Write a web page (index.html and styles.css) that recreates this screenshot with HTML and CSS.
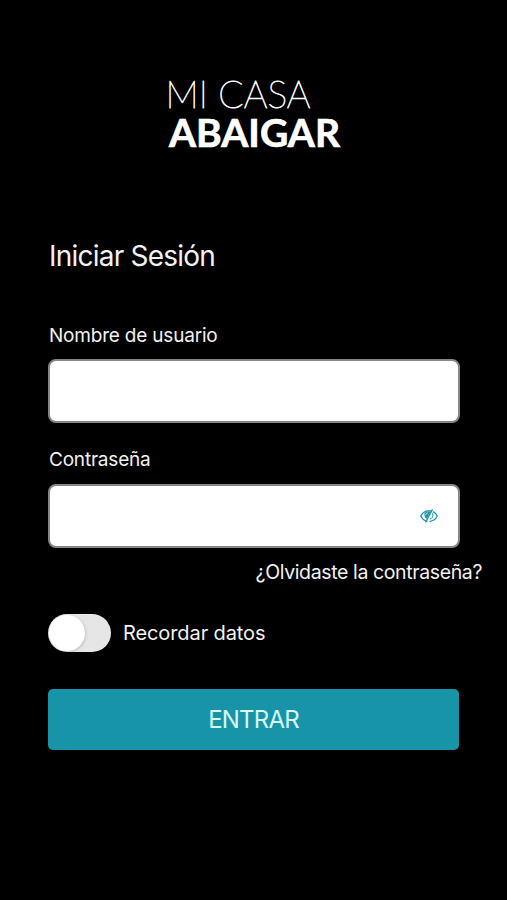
FILE: index.html
```html
<!DOCTYPE html>
<html lang="es">
<head>
<meta charset="utf-8">
<title>Mi Casa Abaigar</title>
<link rel="stylesheet" href="styles.css">
</head>
<body>
<main class="screen">
  <svg class="logo" width="190" height="86" viewBox="0 0 190 86" role="img" aria-label="Mi Casa Abaigar">
    <text class="logo-light" x="0.5" y="42.3" textLength="145" lengthAdjust="spacingAndGlyphs">MI CASA</text>
    <text class="logo-bold" x="4" y="81" textLength="171" lengthAdjust="spacingAndGlyphs">ABAIGAR</text>
  </svg>
  <form class="form">
    <h1 class="title">Iniciar Sesión</h1>
    <label class="label" for="user">Nombre de usuario</label>
    <div class="field"><input class="input" id="user" type="text"></div>
    <label class="label" for="pass">Contraseña</label>
    <div class="field">
      <input class="input" id="pass" type="password">
      <svg class="eye" width="18" height="14" viewBox="0 0 18 14" fill="none" stroke="#1795a8" stroke-linecap="round">
        <path d="M7 12.2C4.2 11.6 2 9.7.8 7 2.3 3.7 5.2 1.8 8.7 1.8q1 0 2 .2" stroke-width="1.3"/>
        <path d="M13.2 2.9C15 3.8 16.4 5.2 17.2 7c-1.4 3-4 5-7.2 5.3" stroke-width="1.2"/>
        <path d="M12.6 4.8c.8 2.6-.1 4.4-2.4 5.2" stroke-width="1"/>
        <path d="M4.6 4.2C5.8 2.5 8 2 10.5 3L6.4 10C4.7 8.6 4 6.2 4.6 4.2Z" fill="#1795a8" stroke="none"/>
        <path d="M12.2.9 5.7 13" stroke-width="1.3"/>
        <path d="M5.6 5.9q.4-1.6 2-2" stroke="#fff" stroke-width=".8"/>
      </svg>
    </div>
    <a class="forgot">¿Olvidaste la contraseña?</a>
    <label class="remember">
      <span class="switch"><span class="knob"></span></span>
      <span class="remember-text">Recordar datos</span>
    </label>
    <button class="submit" type="button"><span class="submit-text">ENTRAR</span></button>
  </form>
</main>
</body>
</html>
```
FILE: styles.css
```css
* { box-sizing: border-box; }
body {
  margin: 0;
  background: #000;
  color: #f2f2f2;
  font-family: Inter, "Liberation Sans", sans-serif;
}
.screen {
  height: 900px;
  padding: 66px 48px 0;
  overflow: hidden;
}
.logo { display: block; margin-left: 117px; fill: #fff; font-family: Lato, sans-serif; overflow: visible; }
.logo-light { font-size: 37.5px; font-weight: 100; stroke: #fff; stroke-width: .9px; }
.logo-bold { font-size: 39px; font-weight: 700; stroke: #fff; stroke-width: .7px; }
.form { display: flex; flex-direction: column; padding-top: 86px; }
.title { margin: 0 0 49px 1px; font-size: 28px; line-height: 36px; font-weight: 400; letter-spacing: -.78px; }
.label { margin: 0 0 10px 1px; font-size: 19px; line-height: 26px; letter-spacing: -.2px; }
.field {
  display: flex;
  align-items: center;
  width: 412px;
  height: 64px;
  margin-bottom: 24px;
  padding-right: 20px;
  background: #fff;
  border: 2px solid #868686;
  border-radius: 8px;
}
.input { flex: 1; min-width: 0; height: 54px; border: 0; outline: 0; background: transparent; font-size: 20px; padding: 0 12px; }
.field + .label { margin-bottom: 11px; }
.field:has(.eye) { margin-bottom: 11px; }
.forgot { align-self: flex-end; margin-right: -23px; font-size: 19.5px; line-height: 26px; white-space: nowrap; letter-spacing: -.38px; }
.remember { display: flex; align-items: center; gap: 12px; margin-top: 29px; height: 38px; font-size: 20px; letter-spacing: -.1px; }
.switch { width: 63px; height: 38px; padding: 1px; border-radius: 19px; background: #e6e6e7; }
.knob { display: block; width: 36px; height: 36px; border-radius: 50%; background: #fff; box-shadow: 1px 1px 3px rgba(0, 0, 0, .15); }
.submit {
  width: 411px;
  height: 61px;
  margin-top: 37px;
  padding: 0;
  border: 0;
  border-radius: 5px;
  background: #1794a7;
  color: #d5fbff;
  font: 400 24px/30px Inter, sans-serif;
  letter-spacing: -.8px;
}
```
